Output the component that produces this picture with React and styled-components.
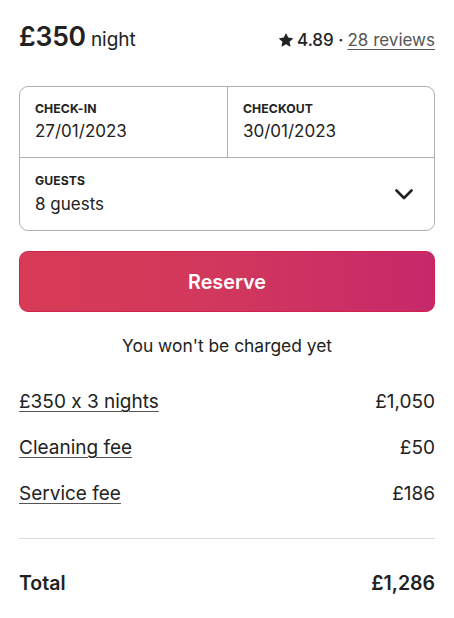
import React from 'react';
import styled, { createGlobalStyle } from 'styled-components';

const colors = {
  text: '#222222',
  border: '#b0b0b0',
  divider: '#dddddd',
};

const GlobalStyle = createGlobalStyle`
  html, body {
    margin: 0;
    padding: 0;
    background: #ffffff;
  }
  body {
    font-family: Inter, 'Noto Sans', sans-serif;
    font-feature-settings: 'calt' 0;
    color: ${colors.text};
    -webkit-font-smoothing: antialiased;
  }
`;

const Card = styled.div`
  width: 416px;
  padding: 20px 19px 0 19px;
`;

const Header = styled.div`
  display: flex;
  align-items: baseline;
  justify-content: space-between;
  height: 44px;
`;

const Price = styled.div`
  display: flex;
  align-items: baseline;
  gap: 5px;
`;

const Amount = styled.span`
  font-size: 26.5px;
  font-weight: 600;
  letter-spacing: -0.2px;
`;

const Per = styled.span`
  font-size: 19px;
  font-weight: 400;
`;

const Rating = styled.div`
  display: flex;
  align-items: baseline;
  gap: 4px;
  font-size: 17px;
  font-weight: 500;
`;

const Reviews = styled.a`
  color: #555;
  font-weight: 400;
  text-decoration: underline;
  text-underline-offset: 3px;
`;

const Picker = styled.div`
  margin-top: 22px;
  border: 1px solid ${colors.border};
  border-radius: 9px;
  overflow: hidden;
`;

const DateRow = styled.div`
  display: grid;
  grid-template-columns: 1fr 1fr;
  border-bottom: 1px solid ${colors.border};
`;

const Field = styled.div`
  padding: 14px 15px 15px 15px;
  display: flex;
  flex-direction: column;
  gap: 3px;
  border-left: ${p => (p.divided ? `1px solid ${colors.border}` : 'none')};
`;

const GuestField = styled(Field)`
  flex-direction: row;
  align-items: center;
  justify-content: space-between;
  padding: 15px 21px 15px 15px;
`;

const Label = styled.div`
  font-size: 12.2px;
  font-weight: 700;
  letter-spacing: 0.1px;
  line-height: 16px;
`;

const Value = styled.div`
  font-size: 17px;
  font-weight: 400;
  line-height: 22px;
`;

const GuestValue = styled(Value)`
  margin-top: 4px;
`;

const ReserveButton = styled.button`
  display: block;
  margin-top: 20px;
  width: 100%;
  height: 61px;
  border: 1px solid #d4204f;
  border-radius: 9px;
  background: linear-gradient(to right, #d83b56 0%, #d2385c 45%, #c6296a 100%);
  color: #ffffff;
  font-family: inherit;
  font-size: 19.8px;
  font-weight: 600;
  cursor: pointer;
`;

const Note = styled.p`
  margin: 22px 0 0 0;
  text-align: center;
  font-size: 17.4px;
  line-height: 24px;
`;

const Lines = styled.div`
  margin-top: 32px;
  display: flex;
  flex-direction: column;
  gap: 22px;
  padding-bottom: 32px;
  border-bottom: 1px solid ${colors.divider};
`;

const Line = styled.div`
  display: flex;
  justify-content: space-between;
  font-size: 19px;
  line-height: 24px;
  font-weight: ${p => (p.strong ? 600 : 400)};
`;

const Underlined = styled.span`
  text-decoration: underline;
  text-decoration-color: #555;
  text-underline-offset: 3px;
  text-decoration-thickness: 1px;
`;

const TotalRow = styled(Line)`
  margin-top: 32px;
  font-size: 19.5px;
`;

const Star = () => (
  <svg width="14" height="14" viewBox="0 0 32 32" fill="#222" style={{ alignSelf: 'center' }}>
    <path d="M15.094 1.579l-4.124 8.885-9.86 1.27a1 1 0 0 0-.542 1.736l7.293 6.565-1.965 9.852a1 1 0 0 0 1.483 1.061L16 25.951l8.625 4.997a1 1 0 0 0 1.482-1.06l-1.965-9.853 7.293-6.565a1 1 0 0 0-.541-1.735l-9.86-1.271-4.127-8.885a1 1 0 0 0-1.814 0z" />
  </svg>
);

const Chevron = () => (
  <svg width="18" height="11" viewBox="0 0 18 11" fill="none">
    <path d="M1.5 1.5l7.5 7.5 7.5-7.5" stroke="#222" strokeWidth="2.6" strokeLinecap="round" strokeLinejoin="round" />
  </svg>
);

const fees = [
  { label: '£350 x 3 nights', amount: '£1,050' },
  { label: 'Cleaning fee', amount: '£50' },
  { label: 'Service fee', amount: '£186' },
];

const App = () => (
  <>
    <GlobalStyle />
    <Card>
      <Header>
        <Price>
          <Amount>£350</Amount>
          <Per>night</Per>
        </Price>
        <Rating>
          <Star />
          <span>4.89 ·</span>
          <Reviews>28 reviews</Reviews>
        </Rating>
      </Header>

      <Picker>
        <DateRow>
          <Field>
            <Label>CHECK-IN</Label>
            <Value>27/01/2023</Value>
          </Field>
          <Field divided>
            <Label>CHECKOUT</Label>
            <Value>30/01/2023</Value>
          </Field>
        </DateRow>
        <GuestField>
          <div>
            <Label>GUESTS</Label>
            <GuestValue>8 guests</GuestValue>
          </div>
          <Chevron />
        </GuestField>
      </Picker>

      <ReserveButton>Reserve</ReserveButton>
      <Note>You won't be charged yet</Note>

      <Lines>
        {fees.map(f => (
          <Line key={f.label}>
            <Underlined>{f.label}</Underlined>
            <span>{f.amount}</span>
          </Line>
        ))}
      </Lines>

      <TotalRow strong>
        <span>Total</span>
        <span>£1,286</span>
      </TotalRow>
    </Card>
  </>
);

export default App;
